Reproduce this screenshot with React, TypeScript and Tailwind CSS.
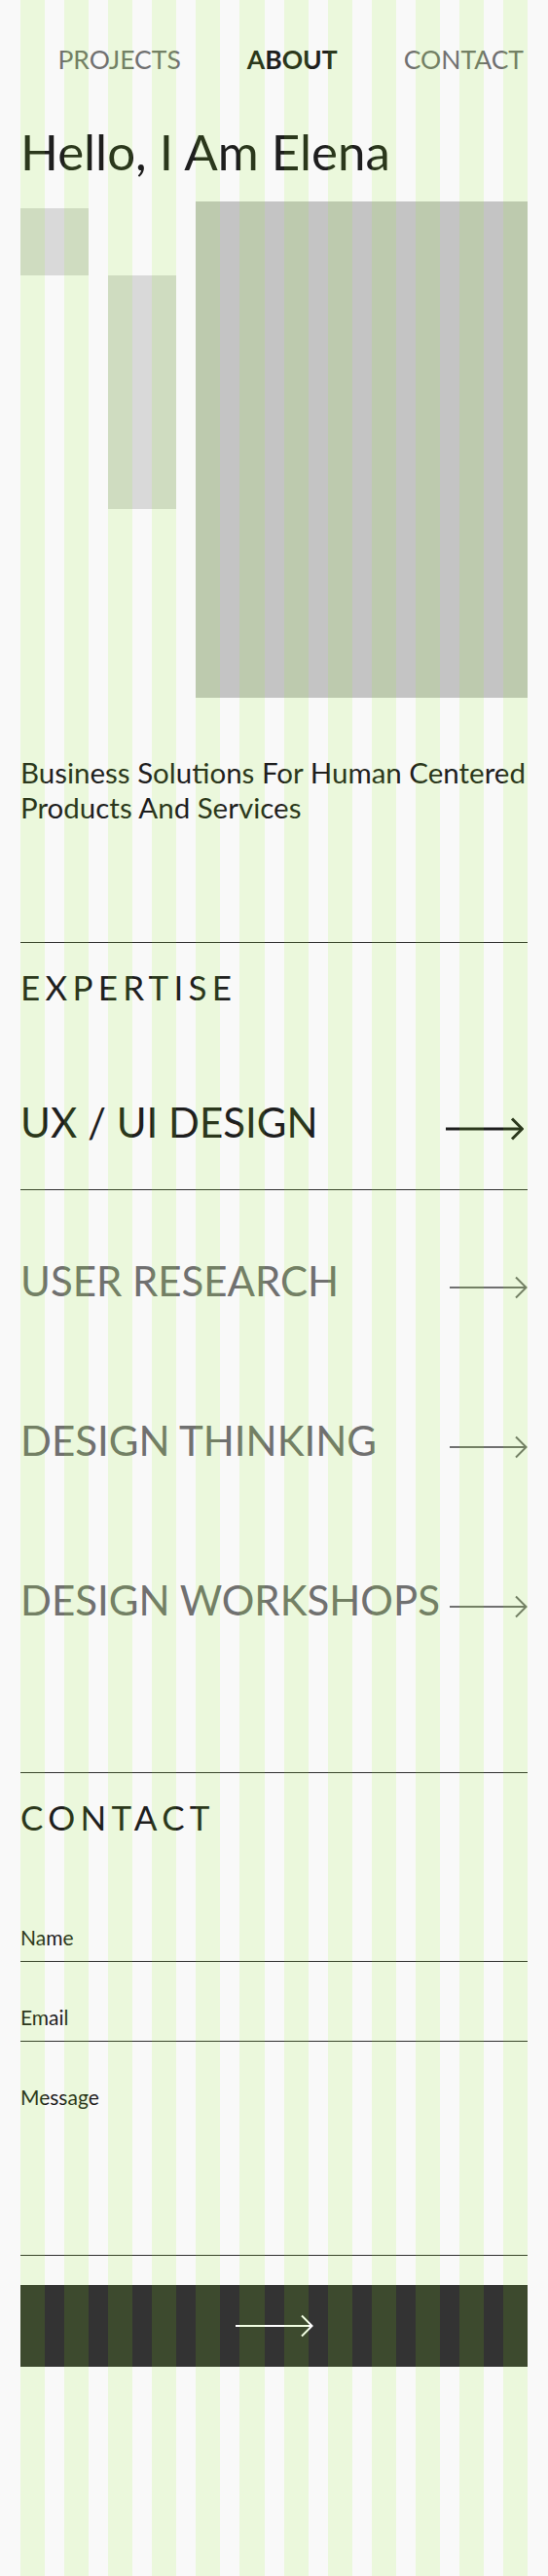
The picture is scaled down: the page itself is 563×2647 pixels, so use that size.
import React from 'react';

const columns = Array.from({ length: 12 }, (_, i) => i);

const expertise = [
  { text: 'USER RESEARCH' },
  { text: 'DESIGN THINKING' },
  { text: 'DESIGN WORKSHOPS' },
];

const Arrow = ({ className = '', strokeWidth = 2 }: { className?: string; strokeWidth?: number }) => (
  <svg width="80" height="24" viewBox="0 0 80 24" fill="none" className={className}>
    <path d="M0 12 H78" stroke="currentColor" strokeWidth={strokeWidth} />
    <path d="M68 1.5 L78.5 12 L68 22.5" stroke="currentColor" strokeWidth={strokeWidth} />
  </svg>
);

const Field = ({ label, tall = false }: { label: string; tall?: boolean }) => (
  <label className={`block border-b border-[#2f2f2f] ${tall ? 'h-[175px]' : 'h-[37px]'}`}>
    <span className="block text-[21px] leading-[24px] text-[#1e1e1e]">{label}</span>
  </label>
);

export default function App() {
  return (
    <div className="relative min-h-screen bg-[#f9f9f9] font-['Lato','Liberation_Sans',sans-serif]">
      <div className="px-[21px] pb-[214px]">
        {/* Navigation */}
        <nav className="pt-[45px] flex justify-end gap-[68px] pr-[4px] text-[26.5px] leading-[32px]">
          <a href="#projects" className="text-[#707070]">PROJECTS</a>
          <a href="#about" className="font-bold text-[#1e1e1e]">ABOUT</a>
          <a href="#contact" className="text-[#707070]">CONTACT</a>
        </nav>

        <h1 className="mt-[51px] text-[51px] leading-[56px] text-[#1e1e1e]">Hello, I Am Elena</h1>

        {/* Pictures */}
        <div className="mt-[23px] grid grid-cols-12 gap-x-[20px] items-start">
          <div className="col-span-2 mt-[7px] h-[69px] bg-[#d9d9d9]" />
          <div className="col-span-2 mt-[76px] h-[240px] bg-[#d9d9d9]" />
          <div className="col-span-8 h-[510px] bg-[#c4c4c4]" />
        </div>

        <p className="mt-[59px] text-[29.5px] leading-[36px] text-[#1e1e1e]">
          Business Solutions For Human Centered Products And Services
        </p>

        {/* Expertise */}
        <section className="mt-[120px] border-t border-[#2f2f2f]">
          <h2 className="mt-[25px] text-[35px] leading-[40px] tracking-[0.15em] text-[#1e1e1e]">EXPERTISE</h2>
          <div className="mt-[93px] flex items-center justify-between border-b border-[#2f2f2f] pb-[43px] text-[42px] leading-[52px] text-[#1e1e1e]">
            <span>UX / UI DESIGN</span>
            <Arrow className="mt-[14px] mr-[4px]" strokeWidth={3} />
          </div>
          <div className="pt-[67px] flex flex-col gap-[112px]">
            {expertise.map((item) => (
              <div key={item.text} className="flex items-center justify-between text-[42px] leading-[52px] text-[#707070]">
                <span className="whitespace-nowrap">{item.text}</span>
                <Arrow className="mt-[14px] shrink-0" />
              </div>
            ))}
          </div>
        </section>

        {/* Contact */}
        <section id="contact" className="mt-[151px] border-t border-[#2f2f2f]">
          <h2 className="mt-[25px] text-[35px] leading-[40px] tracking-[0.15em] text-[#1e1e1e]">CONTACT</h2>
          <form className="mt-[92px] flex flex-col gap-[45px]">
            <Field label="Name" />
            <Field label="Email" />
            <Field label="Message" tall />
          </form>
          <button className="mt-[30px] flex h-[84px] w-full items-center justify-center bg-[#333333] text-white">
            <Arrow />
          </button>
        </section>
      </div>

      {/* Column grid overlay */}
      <div className="pointer-events-none absolute inset-0 px-[21px]">
        <div className="grid h-full grid-cols-12 gap-x-[20px]">
          {columns.map((c) => (
            <div key={c} className="h-full bg-[#89f910]/[0.12]" />
          ))}
        </div>
      </div>
    </div>
  );
}
